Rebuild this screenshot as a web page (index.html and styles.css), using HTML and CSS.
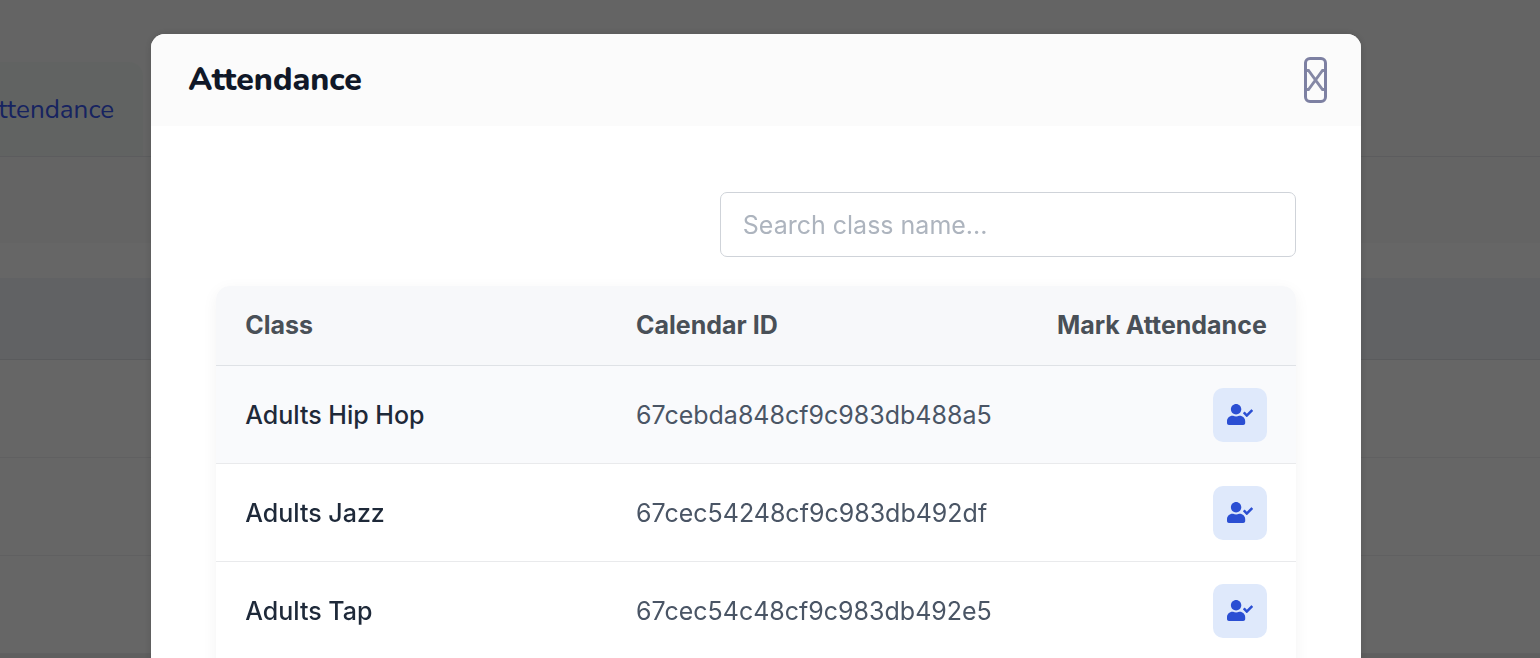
FILE: index.html
```html
<!DOCTYPE html>
<html lang="en">
<head>
<meta charset="utf-8">
<title>Attendance</title>
<link rel="stylesheet" href="styles.css">
</head>
<body>
<svg class="sprite" aria-hidden="true">
  <symbol id="user-check" viewBox="0 0 640 512">
    <path d="M224 256c70.700 0 128-57.300 128-128S294.700 0 224 0 96 57.300 96 128s57.300 128 128 128zm89.600 32h-16.700c-22.200 10.200-46.900 16-72.900 16s-50.600-5.800-72.900-16h-16.700C60.200 288 0 348.200 0 422.400V464c0 26.500 21.500 48 48 48h352c26.500 0 48-21.500 48-48v-41.600c0-74.200-60.200-134.400-134.400-134.400zM636.600 159.600l-27.800-28.100c-4.600-4.700-12.100-4.700-16.800-.1l-104.800 104-45.500-45.800c-4.600-4.700-12.100-4.700-16.800-.1l-28.100 27.900c-4.700 4.600-4.700 12.100-.1 16.800l81.700 82.300c4.600 4.700 12.100 4.700 16.800.1l141.300-140.200c4.600-4.700 4.700-12.200.1-16.800z"/>
  </symbol>
</svg>
<main class="page">
  <nav class="tabs"><a class="tab" href="#attendance">Attendance</a></nav>
  <div class="toolbar"></div>
  <div class="list">
    <div class="list-head"></div>
    <div class="list-row"></div>
    <div class="list-row"></div>
    <div class="list-row"></div>
  </div>
</main>
<div class="overlay">
  <section class="modal" role="dialog" aria-modal="true" aria-labelledby="modal-title">
    <header class="modal-header">
      <h1 class="modal-title" id="modal-title">Attendance</h1>
      <button class="close" type="button" aria-label="Close">
        <svg class="close-icon" viewBox="0 0 17 22" aria-hidden="true"><path d="M0 1.500h1.500L15.500 20.500H17M17 1.500h-1.500L1.500 20.500H0"/></svg>
      </button>
    </header>
    <div class="modal-body">
      <input class="search" type="search" aria-label="Search class name" placeholder="Search class name...">
      <div class="table-card">
        <table class="classes">
          <thead>
            <tr><th class="col-class">Class</th><th class="col-id">Calendar ID</th><th class="col-mark">Mark Attendance</th></tr>
          </thead>
          <tbody>
            <tr class="active"><td class="name">Adults Hip Hop</td><td>67cebda848cf9c983db488a5</td><td class="mark"><button class="mark-button" type="button" aria-label="Mark attendance for Adults Hip Hop"><svg class="mark-icon"><use href="#user-check"/></svg></button></td></tr>
            <tr><td class="name">Adults Jazz</td><td>67cec54248cf9c983db492df</td><td class="mark"><button class="mark-button" type="button" aria-label="Mark attendance for Adults Jazz"><svg class="mark-icon"><use href="#user-check"/></svg></button></td></tr>
            <tr><td class="name">Adults Tap</td><td>67cec54c48cf9c983db492e5</td><td class="mark"><button class="mark-button" type="button" aria-label="Mark attendance for Adults Tap"><svg class="mark-icon"><use href="#user-check"/></svg></button></td></tr>
          </tbody>
        </table>
      </div>
    </div>
  </section>
</div>
</body>
</html>
```
FILE: styles.css
```css
* { box-sizing: border-box; }
body {
  margin: 0;
  height: 100vh;
  overflow: hidden;
  background: #fafafa;
  font-family: Inter, "Liberation Sans", sans-serif;
  font-size: 25px;
}
.sprite { display: none; }
.page { padding-top: 62px; }
.tabs {
  display: flex;
  border-bottom: 1px solid #e5e7eb;
}
.tab {
  width: 143px;
  height: 94px;
  padding-right: 29px;
  border-top-right-radius: 14px;
  display: flex;
  align-items: center;
  justify-content: flex-end;
  background: #f3f8f5;
  color: #3a58f0;
  font-family: Nunito, Lato, sans-serif;
  font-size: 26px;
  text-decoration: none;
}
.toolbar { height: 86px; }
.list { padding-top: 35px; background: #ffffff; border-bottom: 5px solid #eeeeee; }
.list-head { height: 82px; background: #f2f5f9; border-bottom: 1px solid #e2e4e8; }
.list-row { height: 98px; border-bottom: 1px solid #f0f0f2; }
.overlay {
  position: fixed;
  inset: 0;
  padding: 34px 28px 0 0;
  display: flex;
  justify-content: center;
  align-items: flex-start;
  overflow: hidden;
  background: rgba(0, 0, 0, 0.6);
}
.modal {
  width: 80%;
  border-radius: 14px;
  overflow: hidden;
  background: #ffffff;
  box-shadow: 0 0 8px rgba(0, 0, 0, 0.15);
}
.modal-header {
  display: flex;
  align-items: center;
  justify-content: space-between;
  padding: 23px 34px 23px 37px;
  background: #fbfbfb;
}
.modal-title {
  margin: 0;
  color: #101828;
  font-family: Nunito, Lato, sans-serif;
  font-size: 32px;
  font-weight: 800;
  line-height: 44px;
}
.close {
  width: 23px;
  height: 46px;
  padding: 0;
  display: flex;
  align-items: center;
  justify-content: center;
  border: 3px solid #7d80a2;
  border-radius: 6px;
  background: #fbfbfb;
}
.close-icon { flex: none; width: 17px; height: 22px; fill: none; stroke: #8588a5; stroke-width: 2.800; }
.modal-body {
  display: flex;
  flex-direction: column;
  padding: 66px 65px 65px;
}
.search {
  align-self: flex-end;
  width: 576px;
  max-width: 100%;
  height: 65px;
  margin-bottom: 29px;
  padding: 0 22px;
  border: 1px solid #cfd3d9;
  border-radius: 7px;
  background: #ffffff;
  color: #1f2937;
  font: inherit;
}
.search::placeholder { color: #adb4be; opacity: 1; }
.table-card {
  padding-bottom: 40px;
  border-radius: 14px;
  overflow: hidden;
  box-shadow: 0 4px 16px rgba(0, 0, 0, 0.05);
}
.classes {
  width: 100%;
  border-collapse: separate;
  border-spacing: 0;
  table-layout: fixed;
  color: #4a5565;
}
.classes th {
  height: 80px;
  padding: 0 29px 2px;
  border-bottom: 1px solid #dfe2e6;
  background: #f7f8fa;
  color: #495057;
  font-weight: 700;
  text-align: left;
  white-space: nowrap;
}
.classes td {
  height: 98px;
  padding: 0 29px;
  border-bottom: 1px solid #e9eaec;
}
.classes .col-class { width: 36.2%; }
.classes .col-id { width: 38%; }
.classes .col-mark, .classes .mark { text-align: right; }
.classes .name { color: #1e2939; font-weight: 500; }
.active { background: #f9fafc; }
.mark-button {
  width: 54px;
  height: 54px;
  padding: 0;
  display: inline-flex;
  align-items: center;
  justify-content: center;
  vertical-align: middle;
  border: 0;
  border-radius: 10px;
  background: #dfe9fb;
}
.mark-icon { width: 26px; height: 21px; fill: #2b4fd3; }
```
